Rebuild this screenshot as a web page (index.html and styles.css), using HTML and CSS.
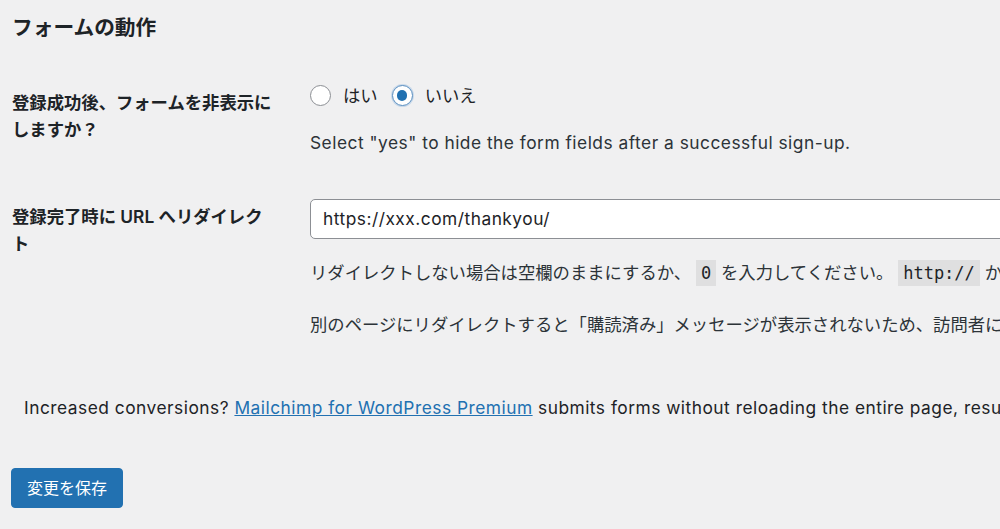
FILE: index.html
```html
<!DOCTYPE html>
<html lang="ja">
<head>
<meta charset="utf-8">
<title>フォームの動作</title>
<link rel="stylesheet" href="styles.css">
</head>
<body>
<div class="wrap">
  <h2 class="title">フォームの動作</h2>
  <div class="form-table">
    <div class="row">
      <div class="th">登録成功後、フォームを非表示にしますか？</div>
      <div class="td">
        <div class="radios">
          <label class="radio-label"><span class="radio"></span>はい</label>
          <label class="radio-label"><span class="radio checked"></span>いいえ</label>
        </div>
        <p class="description en">Select "yes" to hide the form fields after a successful sign-up.</p>
      </div>
    </div>
    <div class="row">
      <div class="th">登録完了時に URL へリダイレクト</div>
      <div class="td">
        <div class="input en">https://xxx.com/thankyou/</div>
        <p class="description nowrap">リダイレクトしない場合は空欄のままにするか、 <code>0</code> を入力してください。 <code>http://</code> から始まる完全な URL を使用してください。</p>
        <p class="description nowrap">別のページにリダイレクトすると「購読済み」メッセージが表示されないため、訪問者には完了したことがわかりません。</p>
      </div>
    </div>
  </div>
  <p class="promo en nowrap">Increased conversions? <a href="#" class="link">Mailchimp for WordPress Premium</a> submits forms without reloading the entire page, resulting in a much better experience for your visitors.</p>
  <p class="submit"><button class="button-primary" type="button">変更を保存</button></p>
</div>
</body>
</html>
```

FILE: styles.css
```css
html, body {
  margin: 0;
  padding: 0;
  background: #f0f0f1;
  overflow: hidden;
}
body {
  width: 1000px;
  height: 529px;
  color: #1d2327;
  font-family: Inter, "Noto Sans CJK JP", sans-serif;
  font-size: 17.33px;
}
.wrap {
  padding-left: 12px;
}
.en {
  letter-spacing: 0.5px;
}
.title {
  margin: 0;
  padding-top: 14px;
  font-size: 20.7px;
  line-height: 27px;
  font-weight: 600;
}
.form-table {
  display: flex;
  flex-direction: column;
  margin-top: 21px;
}
.row {
  display: flex;
}
.th {
  width: 266px;
  flex: none;
  padding: 27px 19px 27px 0;
  font-weight: 600;
  line-height: 27px;
}
.td {
  flex: 1;
  min-width: 0;
  padding: 20px 0 20px 13px;
}
.radios {
  display: flex;
  align-items: center;
  height: 27px;
  gap: 14px;
}
.radio-label {
  display: flex;
  align-items: center;
  gap: 12px;
  line-height: 27px;
}
.radio {
  box-sizing: border-box;
  width: 21px;
  height: 21px;
  border: 1.3px solid #8c8f94;
  border-radius: 50%;
  background: #fff;
  display: flex;
  align-items: center;
  justify-content: center;
}
.radio.checked {
  border-color: #5b8fc0;
  box-shadow: 0 0 0 1px #c9d9ea;
}
.radio.checked::before {
  content: "";
  width: 10.5px;
  height: 10.5px;
  border-radius: 50%;
  background: #2271b1;
}
.description {
  margin: 20px 0 0;
  line-height: 27px;
  color: #2c3338;
}
.nowrap {
  white-space: nowrap;
}
.input {
  box-sizing: border-box;
  width: 800px;
  height: 40px;
  margin-top: 3px;
  padding: 0 12px;
  border: 1.3px solid #8c8f94;
  border-radius: 5px;
  background: #fff;
  line-height: 38px;
  font-size: 17.33px;
}
.row + .row .description {
  margin-top: 20px;
}
.row + .row .description + .description {
  margin-top: 24px;
}
code {
  font-family: "DejaVu Sans Mono", monospace;
  font-size: 17px;
  background: rgba(0, 0, 0, 0.07);
  padding: 3px 5px 3px;
  color: #1d2327;
}
.promo {
  margin: 36px 0 0;
  padding-left: 12px;
  line-height: 27px;
}
.link {
  color: #2271b1;
  text-decoration: underline;
}
.submit {
  margin: 47px 0 0;
  padding-left: 0;
}
.button-primary {
  box-sizing: border-box;
  height: 40px;
  padding: 0 15px;
  margin-left: -1px;
  border: 1px solid #2271b1;
  border-radius: 4px;
  background: #2271b1;
  color: #fff;
  font-family: Inter, "Noto Sans CJK JP", sans-serif;
  font-size: 16px;
  line-height: 38px;
}
```
